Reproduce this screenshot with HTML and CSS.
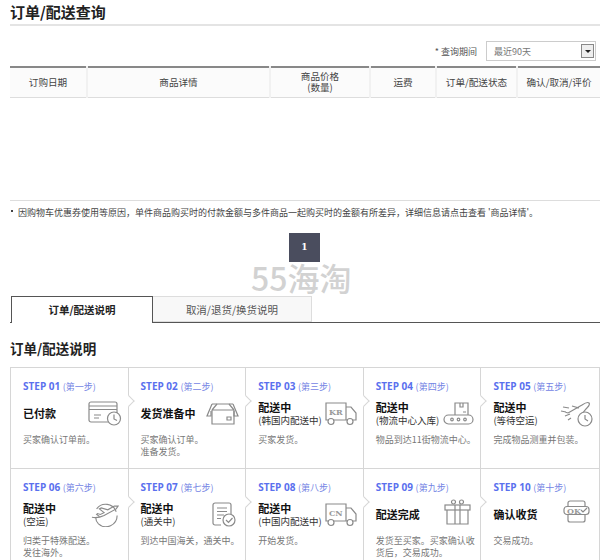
FILE: index.html
```html
<!DOCTYPE html>
<html lang="zh-CN">
<head>
    <meta charset="UTF-8">
    <title>订单/配送查询</title>
    <link rel="stylesheet" href="styles.css">
</head>
<body>
    <div class="page">
        <h1 class="page-title">订单/配送查询</h1>

        <div class="filter">
            <span class="filter-label">* 查询期间</span>
            <div class="select">
                <span>最近90天</span>
                <span class="select-btn"><i class="select-arrow"></i></span>
            </div>
        </div>

        <table class="order-table">
            <thead>
                <tr>
                    <th class="col-date">订购日期</th>
                    <th class="col-info">商品详情</th>
                    <th class="col-price">商品价格<br>(数量)</th>
                    <th class="col-ship">运费</th>
                    <th class="col-state">订单/配送状态</th>
                    <th class="col-act">确认/取消/评价</th>
                </tr>
            </thead>
        </table>
        <div class="order-empty"></div>

        <p class="note"><span class="note-dot"></span>因购物车优惠券使用等原因，单件商品购买时的付款金额与多件商品一起购买时的金额有所差异，详细信息请点击查看 '商品详情'。</p>

        <div class="pager"><a class="pager-num">1</a></div>
        <div class="watermark">55海淘</div>

        <div class="tabs">
            <div class="tab active">订单/配送说明</div>
            <div class="tab">取消/退货/换货说明</div>
        </div>

        <h2 class="section-title">订单/配送说明</h2>

        <div class="steps">
            <div class="step">
                <div class="step-no">STEP 01 <span>(第一步)</span></div>
                <div class="step-main">
                    <div class="step-name"><strong>已付款</strong></div>
                    <svg class="icon" width="34" height="25" viewBox="0 0 34 25"><rect x="1" y="1" width="28" height="20" rx="2"/><path d="M1 5h28M1 8.5h28M6 14h7M6 17h5"/><circle class="knock" cx="26" cy="17.5" r="6.5"/><path d="M26 13.5v4.5l3 1.500"/></svg>
                </div>
                <p class="step-desc">买家确认订单前。</p>
            </div>
            <div class="step">
                <div class="step-no">STEP 02 <span>(第二步)</span></div>
                <div class="step-main">
                    <div class="step-name"><strong>发货准备中</strong></div>
                    <svg class="icon" width="33" height="23" viewBox="0 0 33 23"><path d="M6 2h21M6 2L1 14h4V9M27 2l5 12h-4V9"/><path d="M6 8V22h22V8M6 8l5-6M28 8l-5-6M6 8h22"/><path d="M21 15h4v3h-4z"/></svg>
                </div>
                <p class="step-desc">买家确认订单。<br>准备发货。</p>
            </div>
            <div class="step">
                <div class="step-no">STEP 03 <span>(第三步)</span></div>
                <div class="step-main">
                    <div class="step-name"><strong>配送中</strong><em>(韩国内配送中)</em></div>
                    <svg class="icon" width="32" height="24" viewBox="0 0 32 24"><path d="M3 18H1V1h20v17H9M21 5h5l5 6v7h-3M21 18h1"/><circle cx="6" cy="19.5" r="3"/><circle cx="25" cy="19.5" r="3"/><text class="icon-text" x="4" y="13">KR</text></svg>
                </div>
                <p class="step-desc">买家发货。</p>
            </div>
            <div class="step">
                <div class="step-no">STEP 04 <span>(第四步)</span></div>
                <div class="step-main">
                    <div class="step-name"><strong>配送中</strong><em>(物流中心入库)</em></div>
                    <svg class="icon" width="31" height="23" viewBox="0 0 31 23"><path d="M12 13V1h13v12M17 1v4h3V1M20 10h3"/><rect x="1" y="13" width="29" height="9" rx="4.5"/><circle cx="9" cy="17.5" r="1.3"/><circle cx="15.5" cy="17.5" r="1.3"/><circle cx="22" cy="17.5" r="1.3"/></svg>
                </div>
                <p class="step-desc">物品到达11街物流中心。</p>
            </div>
            <div class="step">
                <div class="step-no">STEP 05 <span>(第五步)</span></div>
                <div class="step-main">
                    <div class="step-name"><strong>配送中</strong><em>(等待空运)</em></div>
                    <svg class="icon" width="33" height="26" viewBox="0 0 33 26"><path d="M8 12l14-8c3-2 6-3 7-2s-1 4-3 6l-4 5-1 6M8 12l-3-1M12 5l7 2M3 6l6 1M1 10l5 1M5 15l5-2M8 19l3-2"/><circle class="knock" cx="25" cy="18" r="7"/><path d="M25 14v4l3 2"/></svg>
                </div>
                <p class="step-desc">完成物品测重并包装。</p>
            </div>
            <div class="step">
                <div class="step-no">STEP 06 <span>(第六步)</span></div>
                <div class="step-main">
                    <div class="step-name"><strong>配送中</strong><em>(空运)</em></div>
                    <svg class="icon icon-inset" width="28" height="25" viewBox="0 0 30 26"><path d="M6 7a12 12 0 0 1 21 3M28 14a12 12 0 0 1-20 9c-2-2-3-4-3-7"/><path d="M1 16c5 1 9 0 13-2l13-7 2-3-4 0-7 4-7-2-2 1 5 4-4 2-3-1-1 1 3 2"/></svg>
                </div>
                <p class="step-desc">归类于特殊配送。<br>发往海外。</p>
            </div>
            <div class="step">
                <div class="step-no">STEP 07 <span>(第七步)</span></div>
                <div class="step-main">
                    <div class="step-name"><strong>配送中</strong><em>(通关中)</em></div>
                    <svg class="icon icon-inset" width="24" height="25" viewBox="0 0 24 25"><path d="M9 23H3a2 2 0 0 1-2-2V3a2 2 0 0 1 2-2h14a2 2 0 0 1 2 2v9"/><path d="M5 6h10M5 9.5h10M5 13h7M5 16.500h4"/><circle class="knock" cx="17" cy="18" r="6"/><path d="M14 18l2.500 2.500 4-4.500"/></svg>
                </div>
                <p class="step-desc">到达中国海关，通关中。</p>
            </div>
            <div class="step">
                <div class="step-no">STEP 08 <span>(第八步)</span></div>
                <div class="step-main">
                    <div class="step-name"><strong>配送中</strong><em>(中国内配送中)</em></div>
                    <svg class="icon" width="32" height="24" viewBox="0 0 32 24"><path d="M3 18H1V1h20v17H9M21 5h5l5 6v7h-3M21 18h1"/><circle cx="6" cy="19.5" r="3"/><circle cx="25" cy="19.5" r="3"/><text class="icon-text" x="4" y="13">CN</text></svg>
                </div>
                <p class="step-desc">开始发货。</p>
            </div>
            <div class="step">
                <div class="step-no">STEP 09 <span>(第九步)</span></div>
                <div class="step-main">
                    <div class="step-name"><strong>配送完成</strong></div>
                    <svg class="icon icon-inset icon-up" width="27" height="26" viewBox="0 0 27 26"><rect x="1" y="6" width="25" height="5"/><path d="M3 11v14h21V11M11 6v19M16 6v19"/><circle cx="9.500" cy="3" r="2"/><circle cx="17.500" cy="3" r="2"/></svg>
                </div>
                <p class="step-desc">发货至买家。买家确认收货后，交易成功。</p>
            </div>
            <div class="step">
                <div class="step-no">STEP 10 <span>(第十步)</span></div>
                <div class="step-main">
                    <div class="step-name"><strong>确认收货</strong></div>
                    <svg class="icon icon-inset icon-up" width="27" height="23" viewBox="0 0 27 23"><path d="M5 6V3a2 2 0 0 1 2-2h13a2 2 0 0 1 2 2v3M5 15v5a2 2 0 0 0 2 2h13a2 2 0 0 0 2-2v-5"/><rect x="1" y="6.500" width="25" height="8" rx="3"/><text class="icon-text" x="4" y="13.500">OK</text><path d="M18 10l2 2 4-4"/></svg>
                </div>
                <p class="step-desc">交易成功。</p>
            </div>
        </div>
    </div>
</body>
</html>
```

FILE: styles.css
```css
html, body {
    margin: 0;
    padding: 0;
    background: #fff;
}

body {
    font-family: "Noto Sans CJK SC", "Noto Sans", sans-serif;
    font-size: 10px;
    color: #444;
}

.page {
    position: relative;
    width: 590px;
    height: 560px;
    padding-left: 10px;
    overflow: hidden;
}

.page-title {
    height: 24px;
    margin: 0;
    border-bottom: 2px solid #e4e4e4;
    font-size: 15px;
    line-height: 23px;
    font-weight: 700;
    color: #222;
}

.filter {
    display: flex;
    justify-content: flex-end;
    align-items: center;
    height: 20px;
    margin-top: 15px;
    padding-right: 4px;
    gap: 9px;
    font-size: 9px;
}

.filter-label {
    color: #555;
}

.select {
    display: flex;
    justify-content: space-between;
    align-items: center;
    box-sizing: border-box;
    width: 110px;
    height: 20px;
    padding: 0 1px 0 7px;
    border: 1px solid #ccc;
    color: #777;
}

.select-btn {
    display: flex;
    align-items: center;
    justify-content: center;
    box-sizing: border-box;
    width: 13px;
    height: 14px;
    background: #eee;
    border: 1px solid #888;
}

.select-arrow {
    width: 0;
    height: 0;
    border: 3px solid transparent;
    border-top: 3px solid #222;
    border-bottom: 0;
}

.order-table {
    width: 590px;
    margin-top: 5px;
    border-collapse: collapse;
    border-top: 2px solid #888;
    border-bottom: 1px solid #ddd;
    table-layout: fixed;
}

.order-table th {
    box-sizing: border-box;
    height: 30px;
    padding: 0;
    background: #fbfbfb;
    border-left: 2px solid #f1f1f1;
    font-size: 9.6px;
    line-height: 11px;
    font-weight: 400;
    color: #444;
}

.order-table th:first-child {
    border-left: 0;
}

.col-date { width: 77px; }
.col-info { width: 183px; }
.col-price { width: 100px; }
.col-ship { width: 66px; }
.col-state { width: 81px; }
.col-act { width: 83px; }

.order-empty {
    height: 102px;
    border-bottom: 1px solid #ddd;
}

.note {
    display: flex;
    align-items: center;
    margin: 5px 0 0;
    font-size: 9px;
    line-height: 13px;
    color: #444;
    white-space: nowrap;
}

.note-dot {
    width: 2px;
    height: 2px;
    margin: 0 5px 3px 1px;
    background: #444;
}

.pager {
    display: flex;
    justify-content: center;
    margin-top: 14px;
    padding-right: 1px;
}

.pager-num {
    width: 31px;
    height: 29px;
    background: #4a4d5e;
    font-family: "DejaVu Serif", serif;
    font-size: 9px;
    line-height: 29px;
    font-weight: 700;
    text-align: center;
    color: #fff;
}

.watermark {
    position: absolute;
    left: 251px;
    top: 257px;
    font-family: "Noto Sans CJK SC", sans-serif;
    font-size: 32px;
    line-height: 40px;
    font-weight: 500;
    color: #d2d2d2;
    white-space: nowrap;
}

.tabs {
    display: flex;
    box-sizing: border-box;
    height: 27px;
    margin-top: 34px;
    padding-left: 1px;
    border-bottom: 1px solid #555;
}

.tab {
    box-sizing: border-box;
    width: 159px;
    height: 26px;
    border: 1px solid #ddd;
    border-left: 0;
    background: #f8f8f8;
    font-size: 10.5px;
    line-height: 25px;
    text-align: center;
    color: #555;
}

.tab.active {
    width: 142px;
    height: 27px;
    border: 1px solid #555;
    border-bottom: 0;
    background: #fff;
    font-weight: 700;
    color: #222;
}

.section-title {
    margin: 15px 0 0;
    font-size: 13.5px;
    line-height: 20px;
    font-weight: 700;
    color: #222;
}

.steps {
    display: grid;
    grid-template-columns: repeat(5, 1fr);
    box-sizing: border-box;
    margin-top: 9px;
    border-top: 1px solid #d6d6d6;
    border-left: 1px solid #d6d6d6;
    border-right: 1px solid #d6d6d6;
}

.step {
    position: relative;
    box-sizing: border-box;
    height: 101px;
    padding: 11px 0 0 12px;
    border-right: 1px solid #d6d6d6;
    border-bottom: 1px solid #d6d6d6;
}

.step:nth-child(5n) {
    border-right: 0;
}

.step::after {
    content: "";
    position: absolute;
    right: -5px;
    top: 29px;
    z-index: 1;
    width: 7px;
    height: 7px;
    background: #fff;
    border-top: 1px solid #d6d6d6;
    border-right: 1px solid #d6d6d6;
    transform: rotate(45deg);
}

.step:nth-child(5n)::after {
    display: none;
}

.step-no {
    font-family: "Open Sans", "Noto Sans CJK SC", sans-serif;
    font-size: 10px;
    line-height: 14px;
    font-weight: 700;
    color: #5a70ee;
    white-space: nowrap;
}

.step-no span {
    font-family: "Noto Sans CJK SC", sans-serif;
    font-size: 9px;
    font-weight: 400;
    color: #7484e4;
}

.step-main {
    display: flex;
    justify-content: space-between;
    align-items: center;
    height: 28px;
    margin-top: 6px;
}

.step-name strong {
    display: block;
    font-size: 11px;
    line-height: 14px;
    font-weight: 700;
    color: #111;
    white-space: nowrap;
}

.step-name strong:only-child {
    margin-bottom: 2px;
}

.step-name em {
    display: block;
    font-size: 9.5px;
    line-height: 13px;
    font-style: normal;
    color: #333;
    white-space: nowrap;
}

.icon {
    flex: none;
    margin-right: 6px;
    fill: none;
    stroke: #8a8a8a;
    stroke-width: 1.2;
}

.icon-inset {
    margin-right: 9px;
}

.icon-up {
    margin-top: -6px;
}

.icon .knock {
    fill: #fff;
}

.icon-text {
    font-family: "DejaVu Serif", serif;
    font-size: 8px;
    font-weight: 700;
    fill: #999;
    stroke: none;
}

.step-desc {
    margin: 6px 0 0;
    font-size: 9px;
    line-height: 12px;
    color: #777;
}
```
